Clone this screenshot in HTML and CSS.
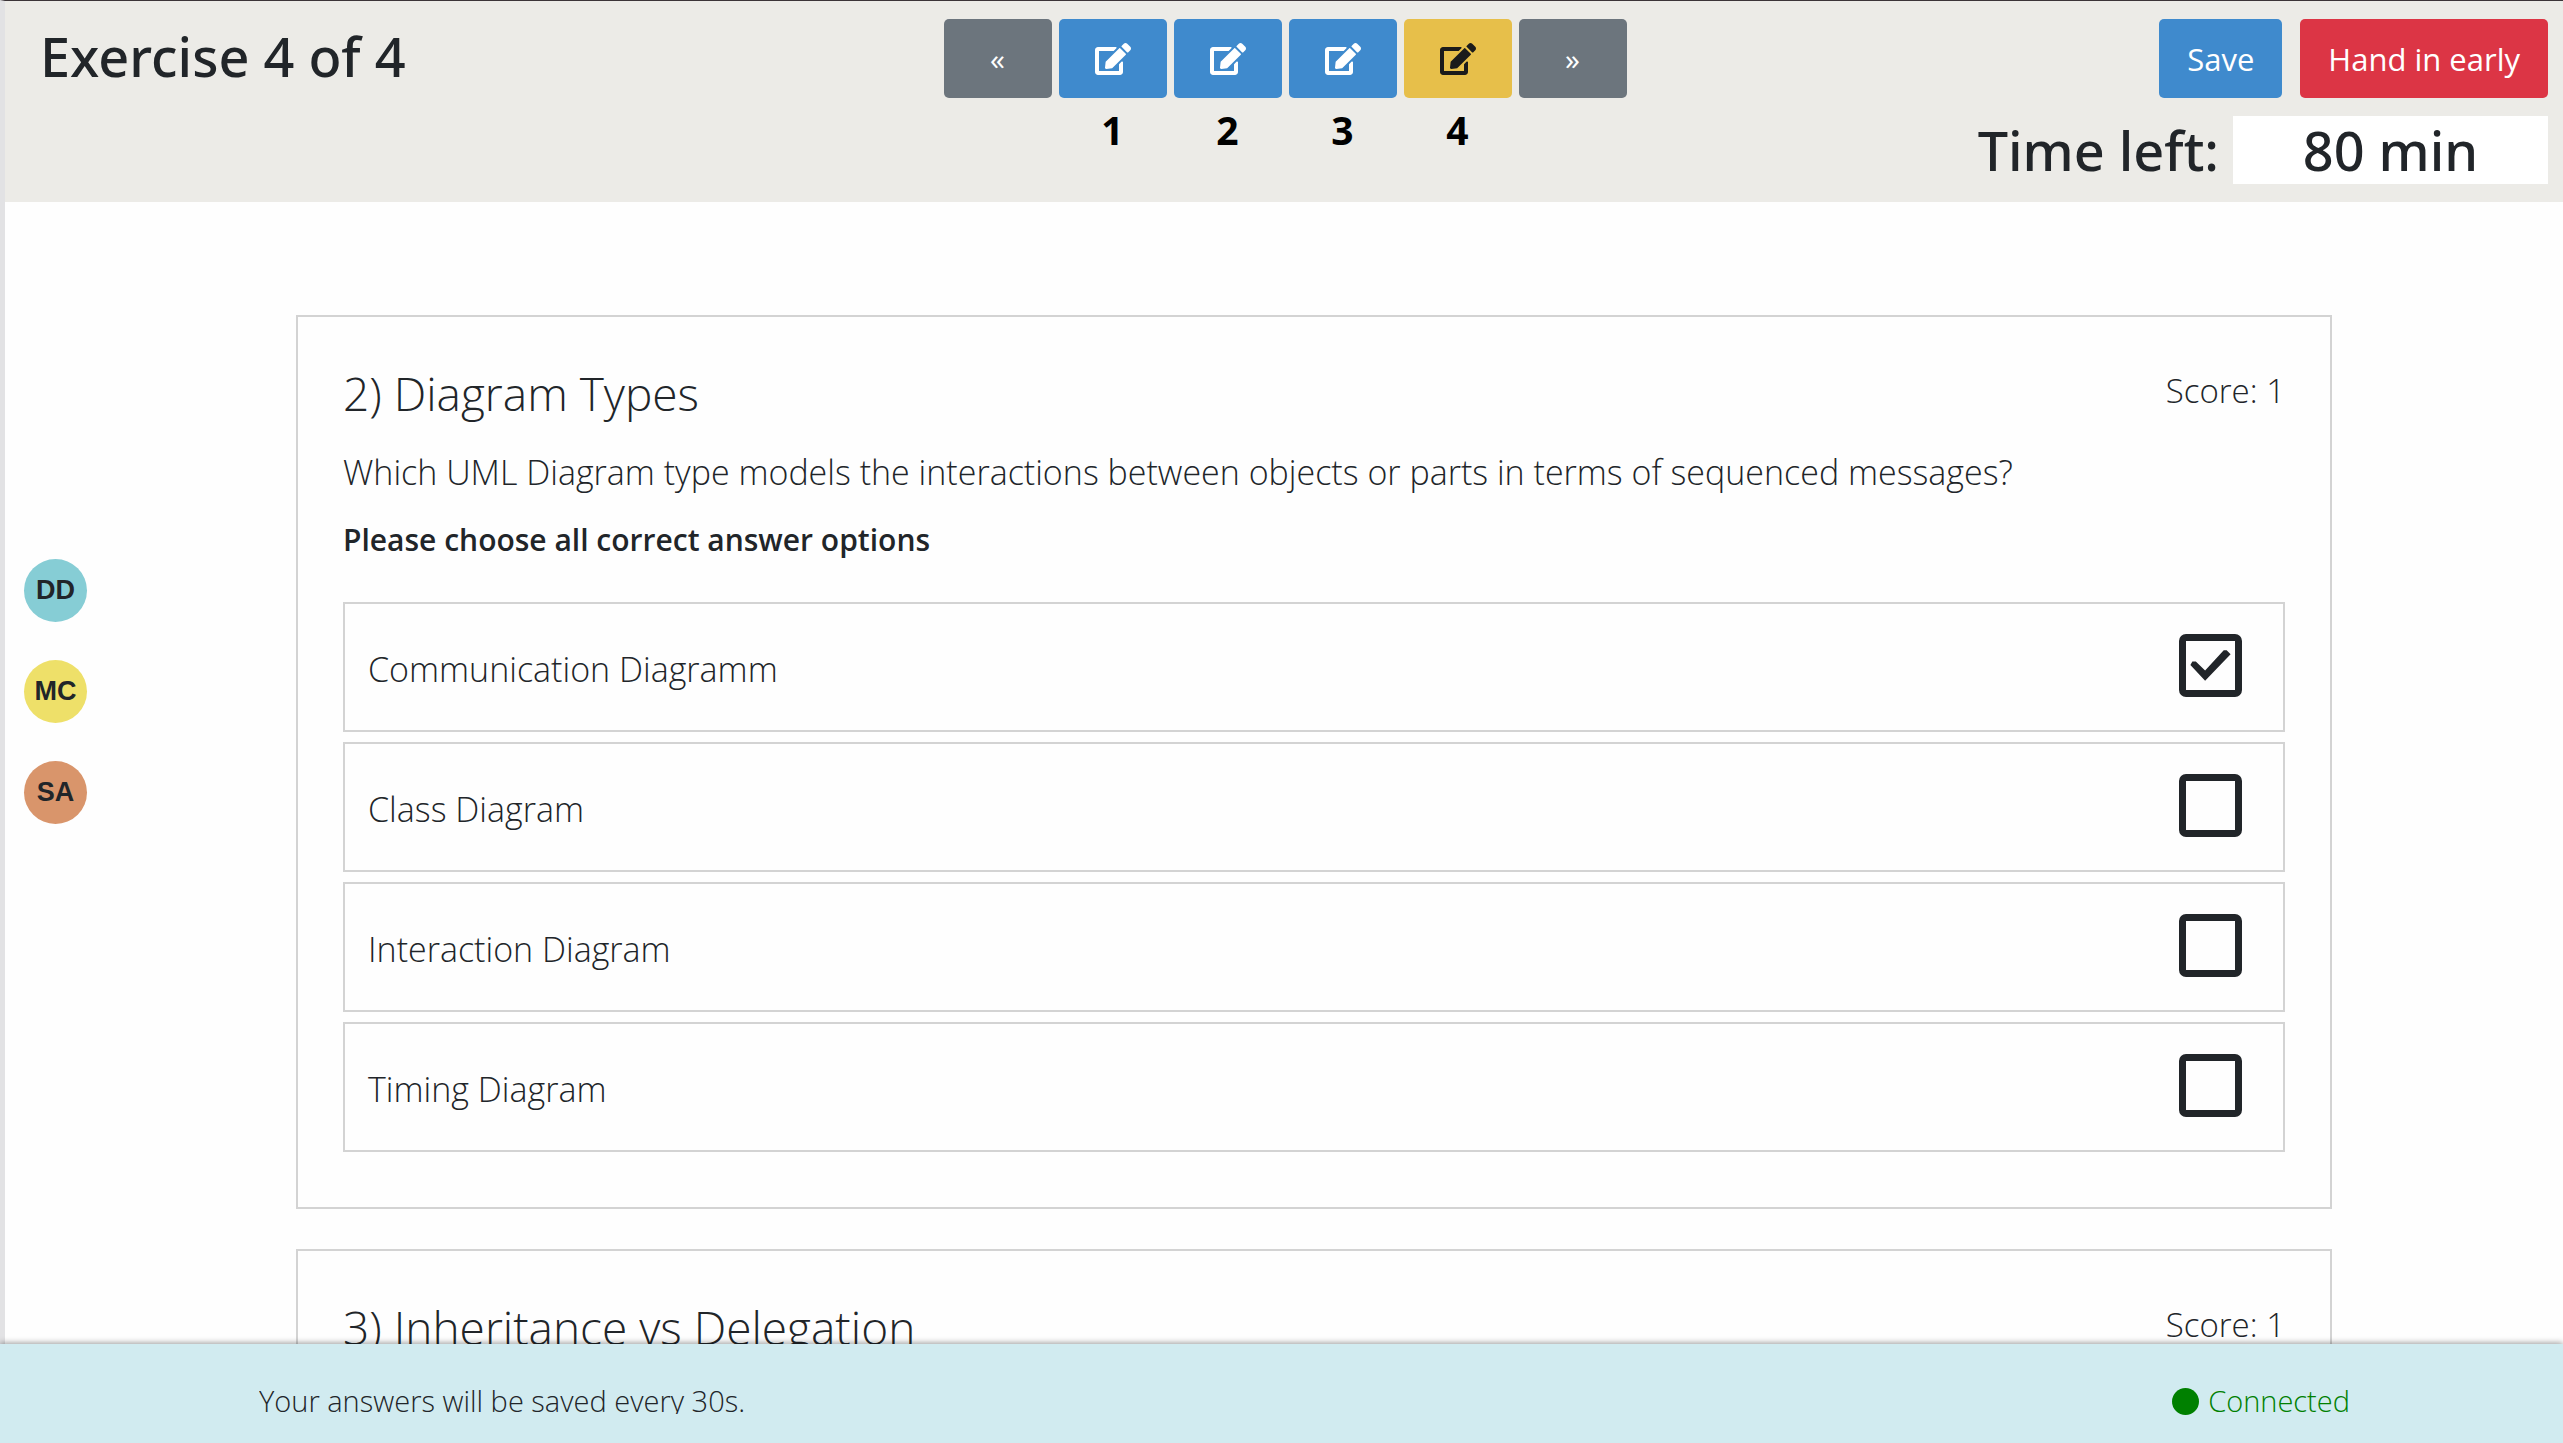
FILE: index.html
```html
<!DOCTYPE html>
<html lang="en">
<head>
<meta charset="utf-8">
<title>Exercise 4 of 4</title>
<link rel="stylesheet" href="styles.css">
</head>
<body>
<svg class="defs" aria-hidden="true">
  <symbol id="edit" viewBox="0 0 576 512"><path fill="currentColor" d="M402.600 83.200l90.200 90.200c3.800 3.800 3.800 10 0 13.800L274.400 405.600l-92.800 10.300c-12.400 1.400-22.900-9.100-21.500-21.500l10.300-92.800L388.800 83.200c3.800-3.800 10-3.800 13.800 0zm162-22.900l-48.800-48.800c-15.200-15.200-39.900-15.200-55.200 0l-35.400 35.400c-3.800 3.800-3.800 10 0 13.800l90.200 90.200c3.800 3.800 10 3.800 13.800 0l35.400-35.400c15.200-15.300 15.200-40 0-55.200zM384 346.200V448H64V128h229.800c3.200 0 6.200-1.300 8.500-3.500l40-40c7.600-7.600 2.200-20.500-8.500-20.500H48C21.500 64 0 85.500 0 112v352c0 26.500 21.500 48 48 48h352c26.500 0 48-21.500 48-48V306.200c0-10.700-12.900-16-20.500-8.500l-40 40c-2.200 2.300-3.500 5.300-3.500 8.500z"/></symbol>
</svg>

<header class="topbar">
  <h1 class="title">Exercise 4 of 4</h1>
  <nav class="pager" aria-label="Exercises">
    <button class="page page-step" type="button" aria-label="Previous">«</button>
    <div class="page-item"><button class="page" type="button" aria-labelledby="l1"><svg class="icon"><use href="#edit"/></svg></button><span class="page-label" id="l1">1</span></div>
    <div class="page-item"><button class="page" type="button" aria-labelledby="l2"><svg class="icon"><use href="#edit"/></svg></button><span class="page-label" id="l2">2</span></div>
    <div class="page-item"><button class="page" type="button" aria-labelledby="l3"><svg class="icon"><use href="#edit"/></svg></button><span class="page-label" id="l3">3</span></div>
    <div class="page-item"><button class="page page-current" type="button" aria-labelledby="l4"><svg class="icon"><use href="#edit"/></svg></button><span class="page-label" id="l4">4</span></div>
    <button class="page page-step" type="button" aria-label="Next">»</button>
  </nav>
  <div class="actions">
    <div class="buttons">
      <button class="btn btn-save" type="button">Save</button>
      <button class="btn btn-submit" type="button">Hand in early</button>
    </div>
    <div class="timer"><span>Time left:</span><span class="time">80 min</span></div>
  </div>
</header>

<div class="body">
  <aside class="team" aria-label="Team">
    <span class="avatar avatar-dd">DD</span>
    <span class="avatar avatar-mc">MC</span>
    <span class="avatar avatar-sa">SA</span>
  </aside>
  <main class="questions">
    <section class="card">
      <div class="card-head"><h2 class="card-title">2) Diagram Types</h2><span class="score">Score: 1</span></div>
      <p class="question">Which UML Diagram type models the interactions between objects or parts in terms of sequenced messages?</p>
      <p class="hint">Please choose all correct answer options</p>
      <div class="options">
        <label class="option"><span class="option-text">Communication Diagramm</span><input class="check" type="checkbox" checked></label>
        <label class="option"><span class="option-text">Class Diagram</span><input class="check" type="checkbox"></label>
        <label class="option"><span class="option-text">Interaction Diagram</span><input class="check" type="checkbox"></label>
        <label class="option"><span class="option-text">Timing Diagram</span><input class="check" type="checkbox"></label>
      </div>
    </section>
    <section class="card">
      <div class="card-head"><h2 class="card-title">3) Inheritance vs Delegation</h2><span class="score">Score: 1</span></div>
    </section>
  </main>
</div>

<footer class="status">
  <p class="status-text">Your answers will be saved every 30s.</p>
  <p class="connection"><span class="dot"></span>Connected</p>
</footer>
</body>
</html>
```

FILE: styles.css
```css
* { box-sizing: border-box; }

body {
  margin: 0;
  height: 100vh;
  display: flex;
  flex-direction: column;
  overflow: hidden;
  background: #fefefe;
  color: #212529;
  font-family: "Open Sans", "Noto Sans", sans-serif;
  font-weight: 300;
}

h1, h2, p { margin: 0; font-weight: inherit; }
button { border: 0; padding: 0; font: inherit; color: inherit; }
.defs { display: none; }

.topbar, .body { border-left: 5px solid #e2e2e4; }

.topbar {
  display: grid;
  grid-template-columns: 1fr auto 1fr;
  align-items: start;
  padding: 18px 15px 18px 17px;
  border-top: 1px solid #3b3438;
  background: #ecebe7;
}
.title { padding-left: 18px; line-height: 74px; }
.title, .timer { font-family: "Noto Sans", "Open Sans", sans-serif; font-size: 54px; font-weight: 500; }

.pager { display: flex; align-items: flex-start; gap: 7px; }
.page-item { display: flex; flex-direction: column; align-items: center; gap: 4px; }
.page {
  display: flex;
  align-items: center;
  justify-content: center;
  width: 108px;
  height: 79px;
  border-radius: 5px;
  background: #3f8acd;
  color: #fff;
}
.page-step { background: #6c757d; font-size: 30px; font-weight: 400; }
.page-current { background: #e7bf4a; color: #1b1b1b; }
.icon { width: 36px; height: 32px; }
.page-label { font-size: 39px; line-height: 56px; font-weight: 700; color: #000; }

.actions { display: flex; flex-direction: column; align-items: flex-end; gap: 18px; }
.buttons { display: flex; gap: 18px; }
.btn { height: 79px; padding: 0 28px; border-radius: 5px; font-size: 31px; font-weight: 400; color: #fff; }
.btn-save { background: #3f8acd; }
.btn-submit { background: #dc3545; }
.timer { display: flex; gap: 14px; line-height: 68px; }
.time { width: 315px; background: #fff; text-align: center; }

.body { flex: 1; min-height: 0; display: flex; overflow: hidden; }
.team { display: flex; flex-direction: column; gap: 38px; width: 291px; padding: 357px 19px 0; }
.avatar {
  display: flex;
  align-items: center;
  justify-content: center;
  width: 63px;
  height: 63px;
  border-radius: 50%;
  font: 700 27px "Liberation Sans", sans-serif;
}
.avatar-dd { background: #86cdd5; }
.avatar-mc { background: #eee069; }
.avatar-sa { background: #d9956b; }

.questions { flex: 1; min-width: 0; display: flex; flex-direction: column; gap: 40px; padding: 113px 231px 0 0; }
.card { padding: 44px 45px 55px; border: 2px solid #d3d3d3; background: #fefefe; }
.card-head { display: flex; justify-content: space-between; }
.card-title { font-size: 46px; line-height: 64px; }
.score { font-size: 33px; line-height: 60px; }
.question { margin-top: 15px; font-size: 34px; line-height: 64px; }
.hint { margin-top: 14px; font-size: 30px; line-height: 44px; font-weight: 600; }
.options { display: flex; flex-direction: column; gap: 10px; margin-top: 40px; }
.option {
  display: flex;
  align-items: center;
  justify-content: space-between;
  height: 130px;
  padding: 0 41px 0 23px;
  border: 2px solid #d3d3d3;
  font-size: 34px;
}
.option-text { padding-top: 4px; }
.check {
  appearance: none;
  width: 63px;
  height: 63px;
  margin: 0 0 4px;
  border: 7px solid #212529;
  border-radius: 7px;
}
.check:checked::before {
  content: "";
  display: block;
  width: 100%;
  height: 100%;
  background: #212529;
  clip-path: polygon(9% 50%, 13% 43%, 20% 43%, 39% 61%, 77% 20%, 83% 20%, 91% 28%, 39% 82%);
}

.status {
  position: relative;
  display: flex;
  justify-content: space-between;
  align-items: center;
  height: 99px;
  padding: 15px 213px 0 259px;
  background: #d1ebf0;
  box-shadow: 0 -1px 6px #0006;
  font-size: 29px;
  line-height: 26px;
}
.status-text { overflow: hidden; }
.connection { display: flex; align-items: center; gap: 9px; color: #008000; }
.dot { width: 27px; height: 27px; border-radius: 50%; background: currentColor; }
```
